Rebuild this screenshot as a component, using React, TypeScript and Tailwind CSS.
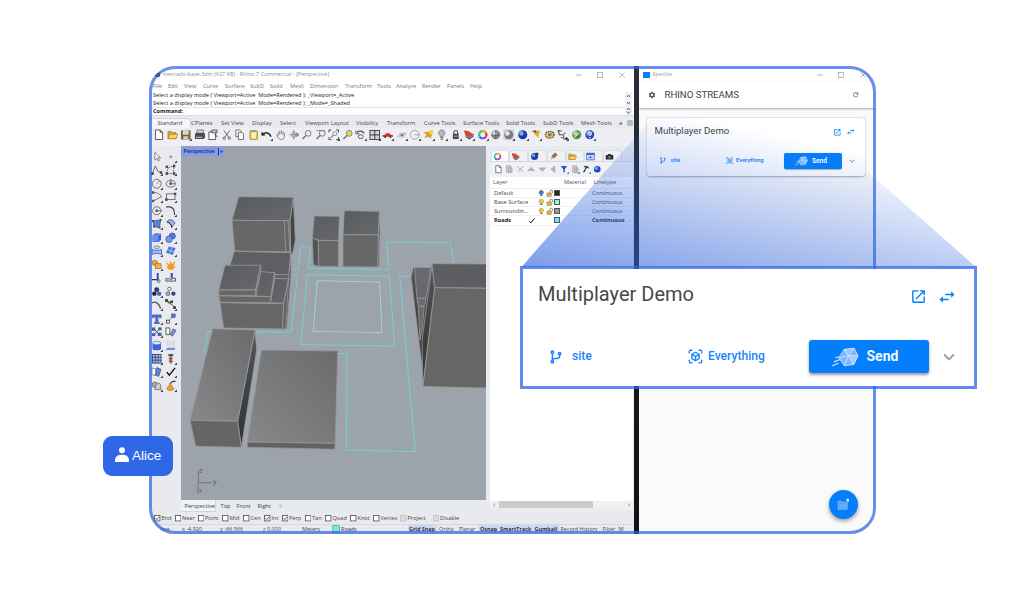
import type { ReactNode } from 'react';
import { MdSettings, MdRefresh } from 'react-icons/md';

type Cell = [label: string, width: string];

const SEGOE = "font-['Open_Sans','Noto_Sans',sans-serif]";
const ROBOTO = "font-['Roboto',sans-serif]";

/* ---------- Material glyphs ---------- */

function Mdi({ d, className }: { d: string; className: string }) {
  return (
    <svg viewBox="0 0 24 24" className={'shrink-0 ' + className} fill="currentColor">
      <path d={d} />
    </svg>
  );
}

const OPEN =
  'M14,3V5H17.59L7.76,14.83L9.17,16.24L19,6.41V10H21V3M19,19H5V5H12V3H5C3.89,3 3,3.9 3,5V19A2,2 0 0,0 5,21H19A2,2 0 0,0 21,19V12H19V19Z';
const SWAP = 'M21,9L17,5V8H10V10H17V13M7,11L3,15L7,19V16H14V14H7V11Z';
const CHEVRON = 'M7.41,8.58L12,13.17L16.59,8.58L18,10L12,16L6,10L7.41,8.58Z';

function Branch({ className }: { className: string }) {
  return (
    <svg viewBox="0 0 12 14" className={'shrink-0 ' + className} fill="none" stroke="currentColor" strokeWidth="1.500">
      <circle cx="2.400" cy="2.200" r="1.200" />
      <circle cx="2.400" cy="11.800" r="1.200" />
      <circle cx="9.600" cy="3.600" r="1.200" />
      <path d="M2.400 3.400v7.200M9.600 4.800v1.400c0 1.600-1 2.300-2.600 2.300H5c-1.600 0-2.600.6-2.600 2" />
    </svg>
  );
}

function CubeScan({ className }: { className: string }) {
  return (
    <svg viewBox="0 0 24 24" className={'shrink-0 ' + className} fill="none" stroke="currentColor" strokeWidth="2.200">
      <path d="M2 7V4a2 2 0 0 1 2-2h3M17 2h3a2 2 0 0 1 2 2v3M22 17v3a2 2 0 0 1-2 2h-3M7 22H4a2 2 0 0 1-2-2v-3" />
      <path d="M12 5.200l5.800 3.300v7L12 18.800l-5.800-3.300v-7zM6.200 8.500L12 12l5.800-3.500M12 12v6.800" />
    </svg>
  );
}

function SendCube({ className }: { className: string }) {
  return (
    <svg viewBox="0 0 28 20" className={'shrink-0 ' + className} stroke="#cfe4ff" strokeWidth=".9" strokeLinejoin="round" strokeLinecap="round">
      <path d="M13 2.200L23 1l4 7.600-4.600 9.200-9.600 1.200-5.600-8z" fill="#7db8ff" />
      <path d="M17.200 8.500L27 8.600l-4.600 9.200z" fill="#a5ceff" />
      <path d="M13 2.200L23 1l-5.800 7.500z" fill="#94c5ff" />
      <path d="M7.200 11l10-2.500M13 2.200L17.200 8.500M17.200 8.500L12.800 19" fill="none" />
      <path d="M4 10.800L6.200 10M2.500 14.800L8 12.800M.6 19L6.500 16.500" fill="none" strokeWidth="1.200" />
    </svg>
  );
}

/* ---------- CAD toolbar glyphs (12 x 12) ---------- */

const K = '#444';
const B = '#3f66c8';

const sheet = <path d="M2.500 1h5l2.500 2.500V11H2.500zM7.500 1v2.500H10" fill="#fff" stroke={K} strokeWidth=".9" />;
const sphere = (a: string, b: string) => (
  <g>
    <circle cx="6" cy="6" r="4.700" fill={b} />
    <circle cx="4.600" cy="4.600" r="2.400" fill={a} />
  </g>
);
const lens = (
  <g fill="none" stroke="#777" strokeWidth="1">
    <circle cx="7.500" cy="4.500" r="3" fill="#e8eef8" />
    <path d="M5.300 6.700L1.500 10.500" strokeWidth="1.600" />
  </g>
);
const wheel = (
  <g fill="none" strokeWidth="2.400">
    <path d="M6 2.200a3.800 3.800 0 0 1 3.300 1.900" stroke="#f59b2b" />
    <path d="M9.300 4.100a3.800 3.800 0 0 1 0 3.800" stroke="#e03c3c" />
    <path d="M9.300 7.900A3.800 3.800 0 0 1 6 9.800" stroke="#c23ac8" />
    <path d="M6 9.800a3.800 3.800 0 0 1-3.300-1.900" stroke="#3d62e8" />
    <path d="M2.700 7.900a3.800 3.800 0 0 1 0-3.800" stroke="#2fc4c0" />
    <path d="M2.700 4.100A3.800 3.800 0 0 1 6 2.200" stroke="#4fc04a" />
  </g>
);
const folder = (
  <g stroke="#9a7218" strokeWidth=".6">
    <path d="M1 2.500h3.500l1 1.200H9.500V10H1z" fill="#d9a534" />
    <path d="M3 5.500h8.500L9.500 10H1z" fill="#fbd163" />
  </g>
);
const layers = (
  <g>
    <path d="M1.500 2L3 8.500 6.500 11 11 8V5L6 7z" fill="#3553a8" />
    <path d="M1 1.500L5.500 2 11 5.500 6.500 8 2.500 6z" fill="#e2442a" />
    <path d="M2.500 6.500L6.500 9l4.500-2.500" fill="none" stroke="#f0a040" strokeWidth=".9" />
  </g>
);
const cube = (
  <g>
    <path d="M1.500 3.500L4 1.500h6.500v6.700L8 10.500H1.500z" fill="#3d63d2" />
    <path d="M1.500 3.500h6.300l2.700-2" fill="none" stroke="#aac0ff" strokeWidth=".7" />
    <path d="M2 4h5.500v6H2z" fill="#6b8ff0" />
  </g>
);
const node = (x: number, y: number) => <rect x={x - 0.9} y={y - 0.9} width="1.800" height="1.800" fill={K} />;

const G: Record<string, ReactNode> = {
  new: sheet,
  folder,
  save: (
    <g>
      <rect x="1" y="1.500" width="10" height="9.500" fill="#6c6a3c" />
      <rect x="3" y="1.500" width="6" height="4.500" fill="#dcdcb8" />
      <rect x="3.500" y="7.500" width="5" height="3.500" fill="#c8c8d0" />
    </g>
  ),
  print: (
    <g>
      <path d="M3.500 1h6.500L9 5H2.500z" fill="#d8d8d8" stroke="#333" strokeWidth=".6" />
      <path d="M1 5l1.500-1h8L11.500 5v4L10 10.500H1z" fill="#4c4c52" />
      <path d="M2 8h6.500v1.200H2z" fill="#c8c8c8" />
    </g>
  ),
  props: (
    <g>
      <path d="M2 3h7v8H2z" fill="#fff" stroke={K} strokeWidth=".9" />
      <path d="M5 1h5.500v3H5z" fill="#ccc" stroke={K} strokeWidth=".8" />
      <path d="M8 6l3 2" stroke={K} />
    </g>
  ),
  cut: (
    <g fill="none" stroke="#666" strokeWidth="1">
      <path d="M3 1.500l5 7M9 1.500l-5 7" />
      <circle cx="3.300" cy="9.600" r="1.200" />
      <circle cx="8.700" cy="9.600" r="1.200" />
    </g>
  ),
  copy: (
    <g fill="#fff" stroke={K} strokeWidth=".8">
      <path d="M2 1h4l1.500 1.500V8H2z" />
      <path d="M4.500 3.500h4L10 5v6H4.500z" />
    </g>
  ),
  paste: (
    <g>
      <rect x="2" y="1.800" width="8" height="9.200" rx="1" fill="#d8b73a" stroke="#8a7420" strokeWidth=".6" />
      <rect x="3.400" y="3.400" width="5.200" height="6.600" fill="#fbf3b8" />
      <rect x="4.200" y="1" width="3.600" height="1.800" fill="#999" />
    </g>
  ),
  undo: (
    <g>
      <path d="M2 5.500C4.500 3 8.500 3.500 10.500 8" fill="none" stroke="#222" strokeWidth="1.500" />
      <path d="M.5 7V2.500L4.800 6.500z" fill="#222" />
    </g>
  ),
  hand: (
    <path
      d="M3.500 6.500V3M5 5.500V1.800M6.700 5.500V1.500M8.400 6V2.500M9.800 4v4c0 1.500-1 3-3 3S4 10 1.500 6.500c.6-.8 1.400-.3 2 .6"
      fill="none"
      stroke="#777"
      strokeWidth=".9"
    />
  ),
  orbit: (
    <g fill="none" stroke="#888" strokeWidth=".9">
      <path d="M6 1v10M1 6h10" />
      <ellipse cx="6" cy="6" rx="2" ry="3.200" />
      <path d="M9 4l2.500 2L9 8z" fill="#888" />
    </g>
  ),
  zoom: lens,
  zoomwin: (
    <g>
      <path d="M1.500 1.500h8.500v5" fill="none" stroke="#555" strokeWidth=".8" strokeDasharray="1.500 .8" />
      {lens}
    </g>
  ),
  zoomext: (
    <g>
      <path d="M1 3.500V1h2.500M8.500 1H11v2.500M11 8.500V11H8.500M3.500 11H1V8.500" fill="none" stroke="#444" />
      <g transform="translate(1.800 1.600) scale(.72)">{lens}</g>
    </g>
  ),
  zoomsel: (
    <g>
      {lens}
      <circle cx="7.500" cy="4.500" r="2.300" fill="#f4cf3c" />
    </g>
  ),
  undoview: (
    <g fill="none" stroke="#555" strokeWidth="1">
      <path d="M2 3.500c3-2 6-1.500 7.500 1" strokeWidth="1.400" />
      <path d="M1 1.500V5h3.500" />
      <ellipse cx="6" cy="8" rx="2.600" ry="2" />
    </g>
  ),
  views: (
    <g>
      <rect x="1" y="1.500" width="10" height="9.500" fill="#d4d6dc" stroke="#444" />
      <path d="M6 1.500V11M1 6.200h10" stroke="#333" />
    </g>
  ),
  car: (
    <g>
      <path d="M.5 6.500L3 6l1.500-1.500h3L9 6l2.500.5v1.700H.5z" fill="#d8281e" />
      <circle cx="3.200" cy="8.300" r="1" fill="#333" />
      <circle cx="8.800" cy="8.300" r="1" fill="#333" />
    </g>
  ),
  cplane: (
    <g>
      <path d="M1 8.500L4 4h7L8.500 8.500z" fill="#d3d6dc" stroke="#bbb" strokeWidth=".5" />
      <path d="M6 6.500l3-1" stroke="#c33" strokeWidth=".7" />
      <circle cx="6" cy="6.500" r="1.200" fill="#4a7a58" />
    </g>
  ),
  circ: (
    <g fill="none" stroke="#999" strokeWidth=".9">
      <circle cx="6" cy="6" r="4.600" />
      <path d="M6 6h5" />
    </g>
  ),
  select: (
    <g>
      <path d="M1 3.500l4-1 5 2-1 3.500-4 .5z" fill="#f0a030" />
      <path d="M6 1.500l4.500-.5v3l-3 2.500z" fill="#f6d23c" />
      <path d="M2 9l3-2.500 3 3" stroke="#c93" strokeWidth="1.400" fill="none" />
    </g>
  ),
  bulb: (
    <g stroke="#777" strokeWidth=".7">
      <path d="M6 1a3.200 3.200 0 0 1 2 5.800L7.500 8h-3L4 6.800A3.200 3.200 0 0 1 6 1z" fill="#b4b8bd" />
      <path d="M4.600 9.200h2.800M5 10.600h2" stroke="#444" strokeWidth="1" />
    </g>
  ),
  lock: (
    <g>
      <path d="M4 5.500V3.600a2 2 0 0 1 4 0v1.900" fill="none" stroke="#555" strokeWidth="1.200" />
      <rect x="3" y="5" width="6" height="5.500" fill="#44474c" />
      <rect x="4.200" y="7" width="3.600" height="1" fill="#aaa" />
    </g>
  ),
  layers,
  wheel,
  wire: (
    <g>
      <circle cx="6" cy="6" r="4.700" fill="#85888c" />
      <circle cx="4.800" cy="4.600" r="2.200" fill="#e2e4e6" />
      <path d="M6 1.300v9.400M1.300 6.500h9.400" stroke="#444" strokeWidth=".7" />
    </g>
  ),
  shade: (
    <g>
      <rect x=".3" y=".3" width="11.400" height="11.400" fill="#d4d6da" />
      {sphere('#e4e4e6', '#77797d')}
    </g>
  ),
  render: sphere('#7fa2f4', '#1836a8'),
  tri: (
    <g>
      <path d="M2 2l8.500-.5-2 8z" fill="#f0a832" />
      <path d="M2 2l4-.8 1 3z" fill="#555" />
    </g>
  ),
  gears: (
    <g>
      <ellipse cx="6" cy="6" rx="4.600" ry="3.600" fill="#d9bd6a" stroke="#6f5c34" strokeWidth="1.400" strokeDasharray="1.600 .8" />
      <ellipse cx="6" cy="6" rx="2" ry="1.500" fill="#777" />
    </g>
  ),
  dims: (
    <g fill="none" stroke="#333" strokeWidth=".9">
      <path d="M2 1v5h5v4.500h4M.5 2h4.500M7 4.500h2M4 9h2" />
      <circle cx="10" cy="10" r="1" fill="#333" />
    </g>
  ),
  globe: (
    <g>
      {sphere('#b4dca0', '#568a50')}
      <path d="M3 9l6-5" stroke="#e6f2de" strokeWidth="1" />
    </g>
  ),
  help: (
    <g>
      {sphere('#7d9cf4', '#2a4ac4')}
      <path d="M4.500 4.600c0-2 3.200-2 3.200 0C7.700 6 6 5.800 6 7.200M6 8.400v1.200" fill="none" stroke="#fff" strokeWidth="1.200" />
    </g>
  ),
  pointer: <path d="M4 1.500v8l2-2 1.500 3 1.200-.6-1.400-2.900H10z" fill="#fff" stroke="#555" strokeWidth=".7" />,
  point: <circle cx="6" cy="6" r="1" fill="none" stroke="#555" strokeWidth=".7" />,
  poly: (
    <g fill="none" stroke={K} strokeWidth=".8">
      <path d="M1.500 10l3-8 3 6 3.500 1" />
      {node(1.5, 10)}
      {node(10.5, 9)}
    </g>
  ),
  crvpts: (
    <g fill="none" stroke={K} strokeWidth=".8">
      <path d="M2 10c0-5 1-7 8-8M2 10h7V3" strokeDasharray="2 1" />
      {node(2, 3)}
      {node(2, 10)}
      {node(9.5, 2)}
      {node(9.5, 10)}
    </g>
  ),
  circle: (
    <g fill="none" stroke="#555" strokeWidth=".8">
      <circle cx="6" cy="6" r="4.600" />
      <path d="M6 6l3-3" />
    </g>
  ),
  ellipse: (
    <g fill="none" stroke="#555" strokeWidth=".8">
      <ellipse cx="6" cy="6" rx="4.800" ry="3.400" />
      <path d="M6 1v5h4.500" />
      {node(6, 6)}
    </g>
  ),
  arc: (
    <g fill="none" stroke="#555" strokeWidth=".8">
      <path d="M2 1.500c5 0 8 2 9 4.500L2 10.500" />
      {node(2, 1.6)}
      {node(2, 10.4)}
    </g>
  ),
  rect: (
    <g fill="none" stroke="#555" strokeWidth=".8">
      <rect x="1.500" y="3" width="9" height="6" />
      {node(1.5, 9)}
      {node(10.5, 3)}
    </g>
  ),
  polygon: (
    <g fill="none" stroke="#555" strokeWidth=".8">
      <path d="M4 2h4l3 4-3 4H4L1 6z" />
      {node(6, 6)}
      <path d="M6 6h5" />
    </g>
  ),
  fillet: <path d="M1 2h3.500C8 2 10 4 10 10.500" fill="none" stroke={K} strokeWidth="1.200" />,
  srf: (
    <g>
      <path d="M2 3l8-1-1 8-6-1z" fill="#5d80dc" stroke="#234" strokeWidth=".6" />
      {node(2, 3)}
      {node(10, 2)}
      {node(9, 10)}
      {node(3, 9)}
    </g>
  ),
  sweep: (
    <g>
      <path d="M2 4c2-3 6-3 8.500 1L7 10C7 7 5 5 2 4z" fill="#9db4f0" stroke="#445" strokeWidth=".7" />
      <path d="M2 4c3 1 5 3 5 6" stroke="#223" fill="none" />
    </g>
  ),
  box: cube,
  spheres: (
    <g>
      <circle cx="7.600" cy="4.200" r="3.200" fill="#5377dc" stroke="#223c88" strokeWidth=".6" />
      <circle cx="4.200" cy="7.600" r="3.400" fill="#7596f0" stroke="#223c88" strokeWidth=".6" />
    </g>
  ),
  tube: (
    <g>
      <ellipse cx="6" cy="2.300" rx="3" ry="1.300" fill="none" stroke="#555" strokeWidth=".7" />
      <path d="M1 4.500c2 1.500 8 1.500 10 0V10c-2-1.500-8-1.500-10 0z" fill="#9fb8f6" stroke={B} strokeWidth=".9" />
    </g>
  ),
  mesh: (
    <g>
      <path d="M4 1.500l7 1.500-3 7.500-7-2.500z" fill="#4e75dc" />
      <path d="M2.500 5l7 2M7.500 2.500L4.500 9.500" stroke="#cfdcff" strokeWidth=".7" />
    </g>
  ),
  fuse: (
    <g>
      <circle cx="4" cy="4" r="2.800" fill="#f2a62c" stroke="#915d10" strokeWidth=".6" />
      <rect x="4.500" y="5" width="6" height="5" fill="#f3b13a" stroke="#915d10" strokeWidth=".6" />
    </g>
  ),
  explode: <path d="M1 2l3.500 4L6 1l1 4.500L11 1.500 9 7l2.500 1.500L8.500 9l1 2H3.500L1 7.500 3.500 8z" fill="#f09a1c" />,
  trim: (
    <g>
      <path d="M7 1v8" stroke="#2c50b8" strokeWidth="2" />
      <path d="M1 8h5" stroke="#333" strokeWidth="1.200" />
      <circle cx="8" cy="9.500" r="1.500" fill="none" stroke="#555" strokeWidth=".8" />
    </g>
  ),
  split: (
    <g>
      <path d="M7 1v5.500" stroke="#2c50b8" strokeWidth="2.200" />
      <path d="M1 7h4l1.500 1.500L8 6.500h3v3H1z" fill="#e6e6ea" stroke="#333" strokeWidth=".8" />
    </g>
  ),
  group: (
    <g>
      <circle cx="6" cy="4" r="2.600" fill="#333a66" />
      <circle cx="3.500" cy="8" r="2.300" fill="#202438" />
      <circle cx="8.500" cy="8" r="2.300" fill="#4863c0" />
    </g>
  ),
  ungroup: (
    <g>
      <circle cx="4.500" cy="3" r="1.800" fill="#fff" stroke="#333" strokeWidth=".7" />
      <circle cx="3" cy="8" r="2" fill="#aab4d4" stroke="#333" strokeWidth=".6" />
      <circle cx="8.800" cy="8" r="2.200" fill="#2d3f88" />
    </g>
  ),
  curve1: <path d="M1 4c4-2 7 0 9 6" fill="none" stroke="#555" strokeWidth="1.400" />,
  curve2: (
    <g fill="none" stroke="#333" strokeWidth=".9">
      <path d="M1.500 1.500c1.500 3.500 6 3 9 8M1.500 1.500L6 4" />
      {node(1.5, 1.5)}
      {node(7, 3)}
      {node(10, 9)}
    </g>
  ),
  text: <path d="M1.500 2h9v3H9L8 4H7.200v5.500l1.500.5v1H3.500v-1L5 9.500V4H4L3 5H1.500z" fill="#4d74dc" stroke="#24408c" strokeWidth=".6" />,
  link: (
    <g>
      <rect x="7" y="1" width="3.600" height="3.600" fill="#4d74dc" stroke="#335" strokeWidth=".5" />
      <rect x="1.500" y="7.500" width="3" height="3" fill="#fff" stroke="#333" strokeWidth=".8" />
      <path d="M4.500 7.500l2.500-3" stroke="#333" strokeWidth=".8" strokeDasharray="1 .6" />
    </g>
  ),
  array: (
    <g fill="#48629f">
      <rect x="1" y="1.500" width="3.500" height="3.500" />
      <rect x="7.500" y="1.500" width="3.500" height="3" />
      <rect x="1" y="7.500" width="3.500" height="3" />
      <rect x="7" y="7" width="4" height="3.500" />
      <path d="M4 4l4 4M8 4L4 8" stroke="#334" strokeWidth=".8" />
    </g>
  ),
  move: (
    <g>
      <path d="M1 2h4v7H1z" fill="#fff" stroke="#333" strokeWidth=".8" />
      <path d="M8.500 3l3 1.500-3.500 6-2.500-1.500z" fill="#7898ec" stroke="#334" strokeWidth=".6" />
    </g>
  ),
  cyl: (
    <g>
      <path d="M1.500 3v6c0 2.400 9 2.400 9 0V3z" fill="#3e65cf" />
      <ellipse cx="6" cy="3.200" rx="4.500" ry="1.800" fill="#dde5ff" stroke={B} strokeWidth=".6" />
    </g>
  ),
  extr: (
    <g>
      <path d="M3 1v5.500M6 1v5.500M9 1v5.500" stroke="#889" strokeWidth=".7" strokeDasharray="1 .7" />
      <path d="M2.500 8H11l-1.500 2.500H.5z" fill="#6c8eea" />
    </g>
  ),
  grid: (
    <g fill="none" stroke="#334a80" strokeWidth="1">
      <rect x="1.500" y="1.500" width="9" height="9" fill="#b9c4de" />
      <path d="M4.500 1.500v9M7.500 1.500v9M1.500 4.500h9M1.500 7.500h9" />
    </g>
  ),
  bolt: (
    <g>
      <path d="M3.500 1h5v2.500h-5z" fill="#555" />
      <path d="M5 3.500h2V11H5z" fill="#c33a30" />
      <path d="M3.800 6h4.400M3.800 8.500h4.400" stroke="#555" strokeWidth="1" />
    </g>
  ),
  sheets: (
    <g stroke="#345" strokeWidth=".6">
      <path d="M1 2l4 1v7L1 9z" fill="#fff" />
      <path d="M6 1.500l4.500 2L8 11l-3.500-2z" fill="#5d82e4" />
    </g>
  ),
  check: <path d="M2 6.500L4.500 9.500 10.500 2" fill="none" stroke="#111" strokeWidth="1.500" />,
  link2: (
    <g>
      <circle cx="4" cy="5" r="2.800" fill="#aaa" stroke="#555" strokeWidth=".7" />
      <path d="M5 5.500c0-3 5-3 5 0l.5 4.500H4z" fill="#ccc" stroke="#555" strokeWidth=".7" />
    </g>
  ),
  cone: (
    <g>
      <path d="M5.500 4l4 5c-1.500 2.500-6.500 2.500-8 0z" fill="#eca227" stroke="#8a5c12" strokeWidth=".5" />
      <path d="M5 4l3-2.500h3" fill="none" stroke="#444" strokeWidth="1.200" />
    </g>
  ),
  blueball: (
    <g>
      {sphere('#6a92f0', '#1d3fa8')}
      <path d="M7 1h4v4" fill="#333" />
    </g>
  ),
  pen: (
    <g>
      <path d="M2 10L4 5l3 3z" fill="#aaa" />
      <path d="M4 5l4-4 3 2.500L7 8z" fill="#b5651f" stroke="#555" strokeWidth=".5" />
    </g>
  ),
  window: (
    <g>
      <rect x="1" y="1.500" width="10" height="9" fill="#dce6ff" stroke="#2d56c4" strokeWidth="1" />
      <path d="M1 3h10" stroke="#2d56c4" strokeWidth="2" />
      <path d="M3 7h6M6 5v4" stroke="#2d56c4" />
    </g>
  ),
  camera: (
    <g>
      <path d="M1 4h2.500l1-1.500h3l1 1.500H11v6H1z" fill="#2c2e32" />
      <circle cx="6" cy="7" r="1.800" fill="#777" />
    </g>
  ),
  x: <path d="M2 2l8 8M10 2l-8 8" stroke="#aaa" strokeWidth="1.400" />,
  up: <path d="M1 8l5-5 5 5z" fill="#b4b4b4" stroke="#999" strokeWidth=".5" />,
  down: <path d="M1 4l5 5 5-5z" fill="#b4b4b4" stroke="#999" strokeWidth=".5" />,
  left: <path d="M8.500 1v10L2.500 6z" fill="#b4b4b4" stroke="#999" strokeWidth=".5" />,
  funnel: <path d="M1 1.500h9L6.800 6v5L4.600 9.500V6z" fill="#2f56cc" />,
  gray: <path d="M2 1h6v9H2zM5 4h5v7H5z" fill="#c9c9cc" stroke="#999" strokeWidth=".7" />,
  hammer: <path d="M2 2l3-1 4 1.500 1.500 2-1.500.5-2-1.500L3 11 1.500 10 5 4z" fill="#333" />,
  ball: sphere('#7da0f4', '#2246bc'),
};

function Glyph({ n, className = 'size-[11px]' }: { n: string; className?: string }) {
  return (
    <svg viewBox="0 0 12 12" className={'shrink-0 overflow-visible ' + className}>
      {G[n.replace('*', '')]}
      {n.endsWith('*') && <path d="M12.400 9.800v2.600H9.800z" fill="#333" />}
    </svg>
  );
}

/* ---------- Data ---------- */

const MENU: Cell[] = [
  ['File', 'w-[15px]'], ['Edit', 'w-[16px]'], ['View', 'w-[19px]'], ['Curve', 'w-[22px]'], ['Surface', 'w-[25px]'],
  ['SubD', 'w-[20px]'], ['Solid', 'w-[20px]'], ['Mesh', 'w-[20px]'], ['Dimension', 'w-[35px]'], ['Transform', 'w-[32px]'],
  ['Tools', 'w-[19px]'], ['Analyze', 'w-[26px]'], ['Render', 'w-[25px]'], ['Panels', 'w-[23px]'], ['Help', 'w-[20px]'],
];

const TABS: Cell[] = [
  ['CPlanes', 'w-[30px]'], ['Set View', 'w-[31px]'], ['Display', 'w-[28px]'], ['Select', 'w-[25px]'],
  ['Viewport Layout', 'w-[51px]'], ['Visibility', 'w-[31px]'], ['Transform', 'w-[37px]'], ['Curve Tools', 'w-[39px]'],
  ['Surface Tools', 'w-[43px]'], ['Solid Tools', 'w-[37px]'], ['SubD Tools', 'w-[38px]'], ['Mesh Tools', 'w-[38px]'],
];

const TOOLBAR = [
  'new', 'folder', 'save*', 'print', 'props', 'cut', 'copy', 'paste', 'undo*', 'hand', 'orbit', 'zoom', 'zoomwin', 'zoomext*',
  'zoomsel', 'undoview*', 'views*', 'car*', 'cplane*', 'circ*', 'select*', 'bulb*', 'lock*', 'layers*', 'wheel*', 'wire', 'shade*',
  'render*', 'tri*', 'gears', 'dims*', 'globe', 'help*',
];

const SIDE = [
  'pointer', 'point*', 'poly*', 'crvpts*', 'circle*', 'ellipse*', 'arc*', 'rect*', 'polygon*', 'fillet*', 'srf*', 'sweep*', 'box*',
  'spheres*', 'tube*', 'mesh*', 'fuse*', 'explode', 'trim', 'split', 'group*', 'ungroup', 'curve1*', 'curve2*', 'text*', 'link*',
  'array*', 'move', 'cyl*', 'extr', 'grid*', 'bolt*', 'sheets*', 'check*', 'link2*', 'cone*',
];

const PANEL_TABS = ['wheel', 'layers', 'blueball', 'pen', 'folder', 'window', 'camera'];
const PANEL_TOOLS = ['new', 'gray', 'x', 'up', 'down', 'left', 'funnel*', 'gray*', 'hammer*', 'ball'];

const LAYERS = [
  { name: 'Default', bulb: '#3f74d8', lock: true, swatch: 'bg-[#262626]', bold: false },
  { name: 'Base Surface', bulb: '#f3c928', lock: true, swatch: 'bg-[#8df5dc]', bold: false },
  { name: 'Surroundin...', bulb: '#f3c928', lock: true, swatch: 'bg-[#999]', bold: false },
  { name: 'Roads', bulb: '', lock: false, swatch: 'bg-[#55f3f3]', bold: true },
];

const OSNAPS: [string, string, boolean, boolean][] = [
  ['End', 'w-[20.5px]', true, false], ['Near', 'w-[23px]', false, false], ['Point', 'w-[24.5px]', false, false],
  ['Mid', 'w-[21px]', false, false], ['Cen', 'w-[21px]', false, false], ['Int', 'w-[17.5px]', true, false],
  ['Perp', 'w-[23px]', true, false], ['Tan', 'w-[20.5px]', false, false], ['Quad', 'w-[25px]', false, false],
  ['Knot', 'w-[23px]', false, false], ['Vertex', 'w-[27px]', false, false], ['Project', 'w-[32.5px]', false, true],
  ['Disable', 'w-[30px]', false, true],
];

const COORDS: Cell[] = [
  ['x -4.920', 'w-[38px]'], ['y -66.566', 'w-[43px]'], ['z 0.000', 'w-[39px]'], ['Meters', 'w-[31px]'],
];

const MODES: [string, string, boolean][] = [
  ['Grid Snap', 'w-[30px]', true], ['Ortho', 'w-[20px]', false], ['Planar', 'w-[21px]', false], ['Osnap', 'w-[20px]', true],
  ['SmartTrack', 'w-[34.5px]', true], ['Gumball', 'w-[26px]', true], ['Record History', 'w-[42px]', false],
  ['Filter', 'w-[16px]', false], ['M', 'w-[6px]', false],
];

function Cells({ items }: { items: Cell[] }) {
  return (
    <>
      {items.map(([t, w]) => (
        <span key={t} className={'shrink-0 ' + w}>
          {t}
        </span>
      ))}
    </>
  );
}

function WindowButtons() {
  return (
    <svg viewBox="0 0 50 8" className="h-[8px] w-[50px] shrink-0" fill="none" stroke="#999" strokeWidth=".7">
      <path d="M1 4h5.500M44.500 1.500l5 5M49.500 1.500l-5 5" />
      <rect x="22.500" y="1.500" width="5" height="5" />
    </svg>
  );
}

/* ---------- 3D viewport ---------- */

function Viewport() {
  return (
    <div className="relative h-[354px] w-[305.5px] shrink-0 overflow-hidden bg-[#9ca3ab]">
      <svg viewBox="181 146 305.500 354" className="block h-[354px] w-[305.5px]">
        <defs>
          <linearGradient id="top" x1="0" y1="0" x2="1" y2="1">
            <stop offset="0" stopColor="#5a5b5e" />
            <stop offset="1" stopColor="#67686b" />
          </linearGradient>
          <linearGradient id="roof" x1="0" y1="1" x2="1" y2="0">
            <stop offset="0" stopColor="#88888a" />
            <stop offset="1" stopColor="#6a6b6d" />
          </linearGradient>
          <linearGradient id="dark" x1="0" y1="0" x2="0" y2="1">
            <stop offset="0" stopColor="#55565a" />
            <stop offset="1" stopColor="#2e2f30" />
          </linearGradient>
        </defs>
        <g fill="none" stroke="#72d2d0" strokeWidth="1">
          <path d="M293 269h5.300l2.400-22.300h9.600l-2 21.600 80.400 1.400-1.700-27.700 63 .7 4 20.600" />
          <path d="M293 274.300l4.700.4L291 332h-35M212 331.300h-3.700L204 351.700h4" />
          <path d="M307.300 274.700l82 1.600 5.400 69.700-93.700-1.300z" />
          <path d="M317.300 280.700l62.400 1.300 2.300 50.700-68.700-1.400z" stroke="#a2d4ce" />
          <path d="M411 276.300h-11.300l15.600 175.400-69-1.700 1-96.300-9-.4M257 352.300h4" />
        </g>
        <g stroke="#99999a" strokeWidth=".8" strokeLinejoin="round">
          <path d="M293.300 197.300l2 42.700-3 15-1.600-3-.7-31.300z" fill="#444548" />
          <path d="M238.700 196.700l54.600.6-3.300 23.400-58-.4z" fill="url(#top)" />
          <path d="M232 220.300l58 .4.700 31.300-56-1z" fill="#676767" />
          <path d="M284.300 220.700l1.400 31M288 220l2 31.700" fill="none" />
          <path d="M290.700 252.700l.3 22-4.300 54h-4l6-54.400z" fill="#505153" />
          <path d="M234.300 251.300l56.400 1.400-2 21.600v5l-58.400-9v-6z" fill="#5e5f62" />
          <path d="M274.700 274.500h14v4.500h-14z" fill="#626365" />
          <path d="M274.700 278.300l14 .7-5 24.300-13.400-.6z" fill="url(#top)" />
          <path d="M260.700 271.700l14 1-3.700 24-15.300-.7z" fill="url(#top)" />
          <path d="M274.700 272.700v5.600l-4.400 24.400.7-6z" fill="#5b5c5e" />
          <path d="M219 295.700l52 1-.7 6-50.300-.4z" fill="#676767" />
          <path d="M225 265.300h35.700l-5 24.700h-37z" fill="url(#top)" />
          <path d="M260.700 265.300v6.400l-5 24V290z" fill="#58595b" />
          <path d="M218.700 290h37v5.700h-36.700z" fill="#686868" />
          <path d="M220 302.700l63.700 1-1 25.300-59-1z" fill="#666666" />
          <path d="M283.700 303.500l5-24.500-3 50h-3z" fill="#5f6062" />
          <path d="M314.300 216l25 .3-.6 24.400-20.400-.4-6-2z" fill="url(#top)" />
          <path d="M318.300 240.300l20.400.4-.4 26-20-.4z" fill="#676767" />
          <path d="M312.300 238.300l6 2v26l-5-1.600z" fill="#525355" />
          <path d="M379.300 211.300l.7 22-1 32.700-1.300 1 .6-32z" fill="#555" />
          <path d="M344.300 210.700l35 .6-1 23.700-35.300-.3z" fill="url(#top)" />
          <path d="M343 234.700l35.300.3-.6 32-34.700-.3z" fill="#676767" />
          <path d="M413.300 267.300l18.700.4-8.300 112L411 277z" fill="url(#dark)" />
          <path d="M414.500 267.500H431l-5 30.800h-9z" fill="#68696c" />
          <path d="M417 298.300h9l-1.500 7.500h-6.500zM418.300 306.500h6l-1.800 20-2.500 14z" fill="#6a6b6d" />
          <path d="M432 263.700l2.700 24-11.700 98-1-45 8-60z" fill="url(#dark)" />
          <path d="M432 263.700l56 .3v24.300l-53.300-.6z" fill="#5d5e61" />
          <path d="M434.700 287.700l53.300.6V388l-65-1.500z" fill="#666665" />
          <path d="M255 330l1.700 20-15.400 97.300-3.600-26z" fill="url(#dark)" />
          <path d="M212.700 328.700l42.300 1.300-17.300 91.300-47.700-1z" fill="url(#roof)" />
          <path d="M190 420.300l47.700 1 3.600 26-45.600-1z" fill="#656563" />
          <path d="M261.300 350l76.400 1-2.400 92.300-88-1.300z" fill="url(#roof)" />
          <path d="M247.300 442l88 1.300-.6 6-87.400-2z" fill="#626260" />
        </g>
        <path d="M198.300 470v12.700H212M198.300 482.700L197.500 493" fill="none" stroke="#6b7076" strokeWidth=".9" />
        <g fill="#5d6268" fontSize="7" fontFamily="Liberation Sans, sans-serif">
          <text x="199" y="472.500">z</text>
          <text x="213" y="484">y</text>
          <text x="198.500" y="492.800">x</text>
        </g>
      </svg>
      <div className="absolute top-[1px] left-0 flex h-[9px] w-[43px] items-center bg-[#819bf0] pl-[3px] text-[5.6px] font-semibold text-[#222c55]">
        <span className="w-[35px]">Perspective</span>
        <span className="h-[7px] w-px bg-[#334]" />
        <span className="ml-[1px] text-[4px]">▼</span>
      </div>
    </div>
  );
}

/* ---------- Layer panel ---------- */

function LayerPanel() {
  return (
    <div className="ml-[4px] flex w-[143px] shrink-0 flex-col overflow-hidden pt-[4px]">
      <div className="flex h-[12px] border-b border-[#d3dbe8] pl-[0.5px]">
        {PANEL_TABS.map((n, i) => (
          <div
            key={n}
            className={
              'flex w-[18.8px] shrink-0 items-center rounded-t-[4px] border-x border-t border-[#d9dfe9] pl-[1px] ' +
              (i === 0 ? 'bg-white' : 'bg-[#f0f1f5]')
            }
          >
            <Glyph n={n} className="size-[9px]" />
          </div>
        ))}
      </div>
      <div className="flex h-[14.5px] items-center bg-[#eff1f5] pl-[3px]">
        {PANEL_TOOLS.map((n, i) => (
          <div key={i} className="flex w-[10.95px] shrink-0 justify-center">
            <Glyph n={n} className="size-[8.5px]" />
          </div>
        ))}
      </div>
      <div className="flex h-[324px] flex-col bg-white text-[5.7px] text-[#444]">
        <div className="flex h-[12.5px] items-center border-b border-[#eee] pl-[3px] text-[#555]">
          <span className="w-[71px]">Layer</span>
          <span className="w-[29.5px]">Material</span>
          <span>Linetype</span>
        </div>
        {LAYERS.map((l) => (
          <div key={l.name} className={'flex h-[9.15px] items-center border-b border-[#f3f3f3] pl-[4px] ' + (l.bold ? 'font-bold text-[#222]' : '')}>
            <span className="w-[34px] shrink-0 whitespace-nowrap">{l.name}</span>
            <span className="flex w-[8.5px] shrink-0">{l.bold && <Glyph n="check" className="size-[7.5px]" />}</span>
            <svg viewBox="0 0 18 9" className="h-[9px] w-[18px] shrink-0">
              {l.lock && (
                <g>
                  <circle cx="4.300" cy="3.500" r="2.200" fill={l.bulb} stroke="#776a30" strokeWidth=".4" />
                  <path d="M3.300 6.500h2" stroke="#555" />
                  <rect x="10" y="4" width="4.200" height="3.200" fill="#ecb92e" stroke="#7b6218" strokeWidth=".5" />
                  <path d="M13 4V2.500a1.300 1.300 0 0 1 2.600 0V4" fill="none" stroke="#555" strokeWidth=".7" />
                </g>
              )}
            </svg>
            <span className={'ml-[-0.5px] h-[6px] w-[6px] shrink-0 border-[0.5px] border-[#555] ' + l.swatch} />
            <span className="ml-[32px] w-[37px] shrink-0">Continuous</span>
            <span>·</span>
          </div>
        ))}
      </div>
      <div className="flex h-[8.5px] items-center bg-[#f0f0f0] text-[#555]">
        <span className="w-[8.5px] text-center text-[7px] leading-none">‹</span>
        <span className="h-[7px] w-[94px] bg-[#cbcbcb]" />
        <span className="flex-1 pr-[3px] text-right text-[7px] leading-none">›</span>
      </div>
    </div>
  );
}

/* ---------- Windows ---------- */

function RhinoWindow() {
  return (
    <div className={'flex h-[468px] w-[484.5px] shrink-0 flex-col overflow-hidden bg-[#e9eaef] text-[5.6px] whitespace-nowrap text-[#444] ' + SEGOE}>
      <div className="flex h-[15px] shrink-0 items-center bg-white pt-[2px] pl-[5px] text-[#8f8f8f]">
        <svg viewBox="0 0 8 8" className="mr-[2px] size-[7px] shrink-0">
          <path d="M0 2l3 1 4-2v5L4 7 1 6z" fill="#3b4048" />
        </svg>
        <span className="w-[412px] text-[5.5px]">mercado-base.3dm (627 KB) - Rhino 7 Commercial - [Perspective]</span>
        <WindowButtons />
      </div>
      <div className="flex h-[11px] shrink-0 items-center bg-white pl-[4px] text-[#777]">
        <Cells items={MENU} />
      </div>
      <div className="flex h-[23px] shrink-0 bg-white text-[#222]">
        <div className="flex w-[476px] flex-col pl-[4px] text-[5.57px]">
          <span className="h-[7.5px] leading-[7.5px]">Select a display mode ( Viewport=Active&nbsp; Mode=Rendered ): _Viewport=_Active</span>
          <span className="h-[7.5px] leading-[7.5px]">Select a display mode ( Viewport=Active&nbsp; Mode=Rendered ): _Mode=_Shaded</span>
          <span className="-ml-[4px] h-[8px] border-t border-[#e3e3e3] pl-[4px] leading-[7px] font-bold">Command:</span>
        </div>
        <svg viewBox="0 0 7 23" className="h-[23px] w-[7px] bg-[#f0f0f2]" fill="none" stroke="#555" strokeWidth=".9">
          <path d="M2 5l1.500-2L5 5M2 10l1.500 2L5 10M2 18l1.500-2L5 18M2 19.500l1.500 2 1.500-2" />
        </svg>
      </div>
      <div className="flex h-[13px] shrink-0 items-end border-t border-[#d9dde4] text-[5.8px]">
        <div className="ml-[2px] flex h-[10px] w-[40px] shrink-0 items-center rounded-tr-[3px] border-t border-r border-[#cfd8e6] bg-[#f4f5f8] pl-[6.5px]">Standard</div>
        <div className="flex h-[10px] items-center">
          <Cells items={TABS} />
          <span className="w-[8px] font-bold">»</span>
          <span className="size-[6px] rounded-[2px] bg-[#b5b8bd]" />
        </div>
      </div>
      <div className="flex h-[18px] shrink-0 items-start bg-[#eeeff2] pt-[0.5px] pl-[3.3px]">
        {TOOLBAR.map((n) => (
          <div key={n} className="flex w-[13.47px] shrink-0 justify-center">
            <Glyph n={n} className="size-[11.5px]" />
          </div>
        ))}
      </div>
      <div className="flex h-[367px] shrink-0">
        <div className="w-[31.5px] shrink-0 pt-[4px] pl-[1px]">
          <div className="grid w-[27px] grid-cols-2">
            {SIDE.map((n) => (
              <div key={n} className="flex h-[13.47px] items-center justify-center">
                <Glyph n={n} className="size-[11.5px]" />
              </div>
            ))}
          </div>
        </div>
        <div className="flex flex-col">
          <Viewport />
          <div className="flex h-[12px] items-center text-[5.7px]">
            <span className="flex h-full w-[35px] items-center border-r border-b border-[#cdd5e4] bg-[#f1f2f5] pt-[1px] pl-[4px]">Perspective</span>
            <span className="ml-[5px] w-[16px]">Top</span>
            <span className="w-[21px]">Front</span>
            <span className="w-[20px]">Right</span>
            <span className="text-[#888]">✧</span>
          </div>
        </div>
        <LayerPanel />
      </div>
      <div className="flex h-[11px] shrink-0 items-center pl-[5px]">
        {OSNAPS.map(([t, w, on, off]) => (
          <span key={t} className={'flex shrink-0 items-center gap-[1px] ' + w}>
            <svg viewBox="0 0 7 7" className="size-[6.5px] shrink-0">
              <rect x=".6" y=".6" width="5.800" height="5.800" fill={off ? '#dcdcdc' : '#fff'} stroke={off ? '#bbb' : '#444'} strokeWidth=".8" />
              {on && <path d="M1.600 3.500L3 5l2.500-3" fill="none" stroke="#222" strokeWidth=".8" />}
            </svg>
            {t}
          </span>
        ))}
      </div>
      <div className="flex h-[10px] shrink-0 items-center border-t border-[#d5d9e2] pb-[1px] text-[5.5px]">
        <span className="w-[33px] pl-[11px]">ane</span>
        <Cells items={COORDS} />
        <span className="size-[6px] bg-[#5ff0ee] ring-[0.5px] ring-[#555]" />
        <span className="w-[67px] pl-[2px] text-[#333]">Roads</span>
        <span className="w-[2px]" />
        {MODES.map(([t, w, on]) => (
          <span key={t} className={'flex h-full shrink-0 items-center border-r border-[#dfe2e8] pl-[1px] text-[5.4px] ' + w + (on ? ' bg-[#cdd8f0] font-bold text-[#333]' : '')}>
            {t}
          </span>
        ))}
      </div>
    </div>
  );
}

function SpeckleWindow() {
  return (
    <div className={'flex flex-1 flex-col bg-[#fafafa] ' + ROBOTO}>
      <div className="flex h-[15px] items-center bg-white pt-[2px] pl-[4px]">
        <span className="h-[6px] w-[7px] bg-[#047efb]" />
        <span className={'ml-[3px] w-[163px] text-[5.6px] text-[#999] ' + SEGOE}>Speckle</span>
        <WindowButtons />
      </div>
      <div className="flex h-[27px] items-center bg-white pt-[1px] pl-[9px] text-[#444] shadow-[0_1px_2px_rgba(0,0,0,0.35)]">
        <MdSettings className="size-[8px] text-[#555]" />
        <span className="ml-[9px] w-[187px] text-[9.7px] tracking-[-0.05px]">RHINO STREAMS</span>
        <MdRefresh className="size-[7.5px] text-[#555]" />
      </div>
      <div className="mt-[10px] ml-[8px] flex h-[58px] w-[218.5px] flex-col rounded-[3px] bg-white shadow-[0_0.5px_2px_rgba(0,0,0,0.35)]">
        <div className="flex h-[27px] items-center pl-[8px]">
          <span className="w-[178.5px] text-[9.6px] text-[#444]">Multiplayer Demo</span>
          <Mdi d={OPEN} className="mt-[1px] size-[8.5px] text-[#047efb]" />
          <Mdi d={SWAP} className="mt-[1px] ml-[4.5px] size-[9.5px] text-[#047efb]" />
        </div>
        <div className="flex h-[31px] items-center pl-[13px] text-[5.9px] font-medium text-[#047efb]">
          <Branch className="h-[7px] w-[6px]" />
          <span className="ml-[5px] w-[55px]">site</span>
          <CubeScan className="size-[7.5px]" />
          <span className="ml-[3px] w-[48px]">Everything</span>
          <div className="flex h-[16px] w-[58px] items-center rounded-[2px] bg-[#047efb] pl-[11px] text-[6.6px] leading-[8px] font-bold text-white shadow-[0_0.5px_1px_rgba(0,0,0,0.3)]">
            <SendCube className="h-[10px] w-[13px]" />
            <span className="ml-[4px] pt-[1px]">Send</span>
          </div>
          <Mdi d={CHEVRON} className="ml-[5px] size-[10px] text-[#999]" />
        </div>
      </div>
      <div className="mt-auto mr-[18.5px] mb-[15.5px] flex size-[29px] items-center justify-center self-end rounded-full bg-[#047efb] shadow-[0_2px_4px_rgba(0,0,0,0.4)]">
        <svg viewBox="0 0 12 12" className="size-[12.5px]" fill="none" stroke="#8cc2ff" strokeWidth=".8">
          <path d="M1.200 3h3l1 1.200h4.500v6.600H1.200z" fill="#4ba0fb" />
          <path d="M3 6.800h5.500M3 8.700h5.500" />
          <circle cx="10.300" cy="2" r="1.500" fill="#c3e0ff" stroke="none" />
        </svg>
      </div>
    </div>
  );
}

function MagnifiedCard() {
  return (
    <div className={'absolute top-[265.5px] left-[520px] h-[123px] w-[457px] border-[3px] border-[#2d66e5]/75 bg-white bg-clip-padding ' + ROBOTO}>
      <div className="flex h-[58px] items-center pb-[7px] pl-[15px]">
        <span className="w-[372px] text-[20px] text-[#484848]">Multiplayer Demo</span>
        <Mdi d={OPEN} className="mt-[5px] size-[17px] text-[#047efb]" />
        <Mdi d={SWAP} className="mt-[5px] ml-[9.5px] size-[20px] text-[#047efb]" />
      </div>
      <div className="flex h-[60px] items-center pl-[26.5px] text-[12.1px] font-medium text-[#1a86fb]">
        <Branch className="h-[14px] w-[12px]" />
        <span className="ml-[10.5px] w-[116px]">site</span>
        <CubeScan className="size-[15px]" />
        <span className="ml-[5px] w-[100.5px]">Everything</span>
        <div className="flex h-[32.5px] w-[120.5px] shrink-0 items-center rounded-[3px] bg-[#047efb] pl-[23px] text-[14px] font-bold text-[#f2f8ff] shadow-[0_1.5px_3px_rgba(0,0,0,0.4)]">
          <SendCube className="h-[20px] w-[27px]" />
          <span className="ml-[8px]">Send</span>
        </div>
        <Mdi d={CHEVRON} className="ml-[9px] size-[22px] text-[#a0a0a0]" />
      </div>
    </div>
  );
}

export default function App() {
  return (
    <main className="relative h-[601px] w-[1025px] overflow-hidden bg-white pt-[66px] pl-[149px]">
      <div className="relative flex h-[468px] w-[727px] overflow-hidden rounded-[26px]">
        <RhinoWindow />
        <div className="w-[5px] shrink-0 bg-linear-to-b from-[#2a2f38] via-[#1b1d22] to-[#121212]" />
        <SpeckleWindow />
      </div>

      <svg viewBox="0 0 1025 601" className="pointer-events-none absolute inset-0 size-full">
        <defs>
          <linearGradient id="beam" gradientUnits="userSpaceOnUse" x1="760" y1="130" x2="724" y2="307">
            <stop offset="0" stopColor="#2f64de" stopOpacity="0" />
            <stop offset="1" stopColor="#2f64de" stopOpacity=".63" />
          </linearGradient>
        </defs>
        <path d="M647 124L653 118H866V170L976 267H521.500z" fill="url(#beam)" />
      </svg>
      <div className="pointer-events-none absolute top-[66px] left-[149px] h-[468px] w-[727px] rounded-[26px] border-[3px] border-[#2d66e5]/72" />

      <MagnifiedCard />

      <div className="absolute top-[436px] left-[103px] flex h-[39.5px] w-[70px] items-center rounded-[9px] bg-[#2f68e7] pl-[12px] font-['Liberation_Sans',Arial,sans-serif] text-[13.5px] text-white">
        <svg viewBox="0 0 14 15" className="mr-[3px] mb-[2px] h-[15px] w-[14px] shrink-0" fill="#fff">
          <circle cx="7" cy="3.200" r="3" />
          <path d="M0 15v-1.500C0 9.500 3 7.800 7 7.800s7 1.700 7 5.700V15z" />
        </svg>
        Alice
      </div>
    </main>
  );
}
